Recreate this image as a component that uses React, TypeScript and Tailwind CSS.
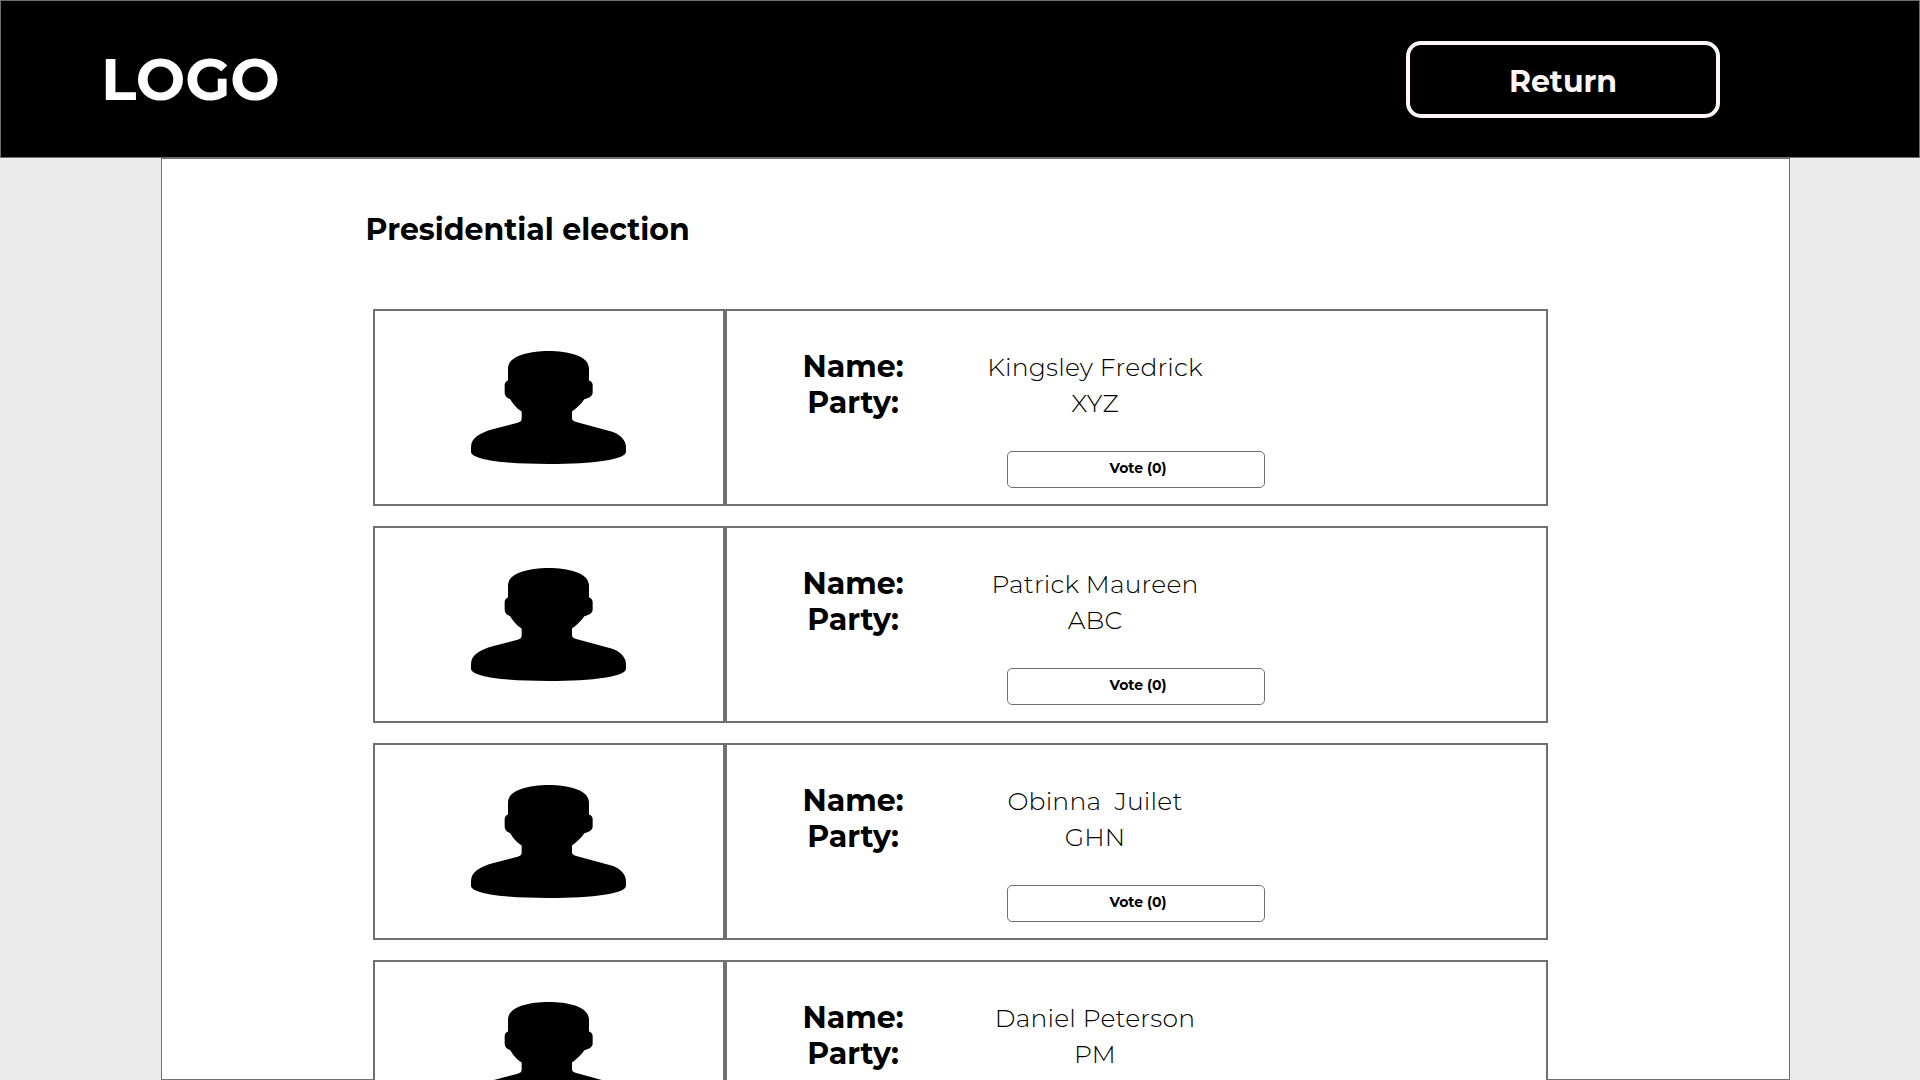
import React from "react";

type Candidate = { name: string; party: string; votes: number };

const candidates: Candidate[] = [
  { name: "Kingsley Fredrick", party: "XYZ", votes: 0 },
  { name: "Patrick Maureen", party: "ABC", votes: 0 },
  { name: "Obinna  Juilet", party: "GHN", votes: 0 },
  { name: "Daniel Peterson", party: "PM", votes: 0 },
];

function Avatar() {
  return (
    <svg viewBox="0 0 465 342" preserveAspectRatio="none" className="h-[113px] w-[155px]" fill="#000">
      <path d="M233 0C176 0 111 14 111 53V89C104 92 101 97 101 103V125C101 136 108 143 117 145C127 161 136 173 152 183V204C152 211 148 214 140 217L65 237C28 247 0 263 0 291V305C0 329 98 342 233 342S465 329 465 305V291C465 268 444 251 421 244L313 214C306 211 303 209 303 203V183C318 173 330 160 340 146C355 142 365 137 365 125V103C365 97 362 92 354 89V53C354 14 290 0 233 0Z" />
    </svg>
  );
}

function CandidateCard({ name, party, votes }: Candidate) {
  return (
    <article className="flex h-[197px] w-[1175px] shrink-0 bg-white">
      <div className="flex w-[352px] border-2 border-[#707070] pl-[96px] pt-[39.5px]">
        <Avatar />
      </div>
      <div className="flex-1 border-2 border-[#707070] pt-[37px]">
        <div className="flex pl-[65.5px]">
          <div className="w-[121px] pt-px text-center text-[30px] font-bold leading-[36px]">
            <div>Name:</div>
            <div>Party:</div>
          </div>
          <div className="ml-[51.5px] w-[260px] whitespace-pre pt-px text-center text-[25px] font-light leading-[36px] tracking-[0.2px]">
            <div>{name}</div>
            <div>{party}</div>
          </div>
        </div>
        <button className="ml-[280px] mt-[30px] flex h-[37px] w-[258px] justify-center rounded-[5px] border border-[#707070] pl-[4px] pt-[7.5px] text-[14px] font-bold leading-[17px]">
          Vote ({votes})
        </button>
      </div>
    </article>
  );
}

export default function App() {
  return (
    <div className="flex h-[1080px] w-full flex-col overflow-hidden bg-[#ebebeb] font-['Montserrat','Inter',sans-serif] text-black">
      <header className="flex h-[158px] shrink-0 justify-between border border-[#707070] bg-black pl-[100px] pr-[199px]">
        <div className="pt-[42px] text-[58.6px] font-bold leading-[72px] text-white">LOGO</div>
        <button className="mt-10 flex h-[77px] w-[314px] justify-center rounded-[15px] border-4 border-[#fff5f5] pt-[19px] text-[30px] font-bold leading-[36px] text-[#fff5f5]">
          Return
        </button>
      </header>
      <main className="ml-[161px] h-[922px] w-[1629px] border border-[#707070] bg-white pl-[203px] pt-[53px]">
        <h1 className="pl-[0.6px] text-[30px] font-bold leading-[36px]">Presidential election</h1>
        <div className="ml-2 mt-[61px] flex flex-col gap-5">
          {candidates.map((c) => (
            <CandidateCard key={c.name} {...c} />
          ))}
        </div>
      </main>
    </div>
  );
}
